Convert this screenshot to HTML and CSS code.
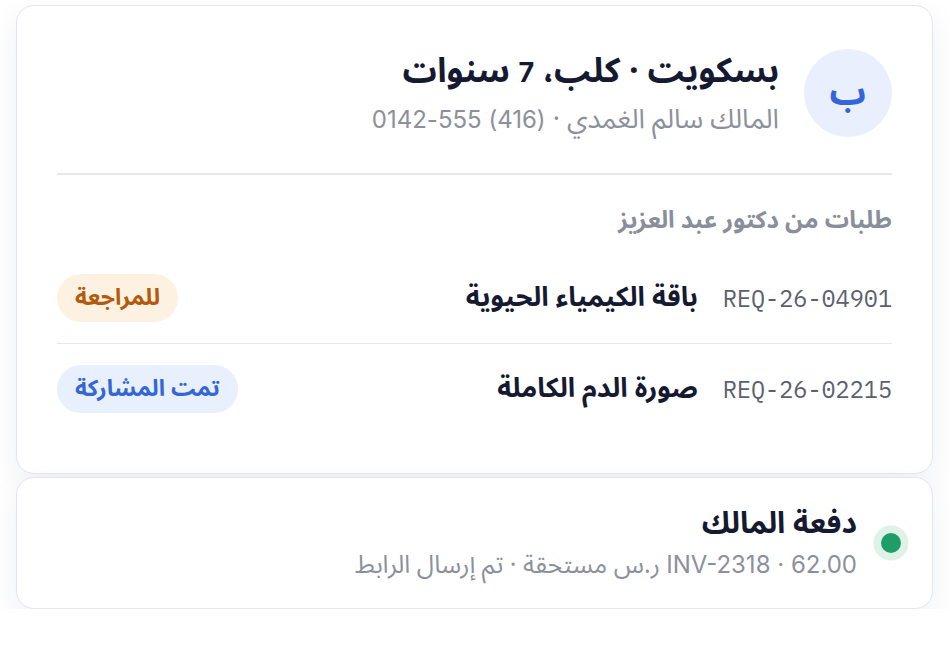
FILE: index.html
```html
<!DOCTYPE html>
<html lang="ar" dir="rtl">
<head>
<meta charset="utf-8">
<link rel="stylesheet" href="styles.css">
</head>
<body>
<div class="stack">
  <section class="card patient">
    <header class="head">
      <div class="avatar">ب</div>
      <div class="who">
        <div class="title">بسكويت · كلب، <span class="lat">7</span> سنوات</div>
        <div class="sub">المالك سالم الغمدي · <span class="lat">(416) 555-0142</span></div>
      </div>
    </header>
    <div class="rule"></div>
    <div class="label">طلبات من دكتور عبد العزيز</div>
    <div class="rows">
      <div class="row">
        <span class="code">REQ-26-04901</span>
        <span class="name">باقة الكيمياء الحيوية</span>
        <span class="badge amber">للمراجعة</span>
      </div>
      <div class="row">
        <span class="code">REQ-26-02215</span>
        <span class="name">صورة الدم الكاملة</span>
        <span class="badge blue">تمت المشاركة</span>
      </div>
    </div>
  </section>
  <section class="card pay">
    <span class="dot"></span>
    <div class="pay-text">
      <div class="pay-title">دفعة المالك</div>
      <div class="pay-sub"><span class="lat">INV-2318 · 62.00</span> ر.س مستحقة · تم إرسال الرابط</div>
    </div>
  </section>
</div>
</body>
</html>
```
FILE: styles.css
```css
html, body {
  margin: 0;
  background: #ffffff;
}
body {
  font-family: "Noto Sans Arabic", Inter, sans-serif;
  color: #151a30;
}
.lat {
  font-family: Inter, sans-serif;
}
.stack {
  display: flex;
  flex-direction: column;
  gap: 3px;
  padding: 5px 17px 0 16px;
}
.card {
  background: #fff;
  border: 1px solid #e3e6f1;
  border-radius: 18px;
  box-shadow: 0 12px 32px rgba(30, 40, 90, 0.07);
}
.patient {
  padding: 43px 40px 39px;
}
.head {
  display: flex;
  align-items: center;
  gap: 25px;
}
.avatar {
  width: 88px;
  height: 88px;
  border-radius: 50%;
  background: #e9effd;
  color: #3563d9;
  font-size: 36px;
  font-weight: 700;
  line-height: 1;
  display: flex;
  align-items: center;
  justify-content: center;
  flex: none;
}
.who {
  display: flex;
  flex-direction: column;
  gap: 10px;
}
.title {
  font-size: 34px;
  font-weight: 700;
  line-height: 42px;
  color: #151a30;
}
.title .lat {
  font-size: 27px;
}
.sub {
  font-size: 27px;
  line-height: 32px;
  color: #8c909c;
}
.sub .lat {
  font-size: 24px;
}
.rule {
  height: 1.5px;
  background: #e6e8ee;
  margin: 36px 0 30px;
}
.label {
  font-size: 24px;
  font-weight: 700;
  line-height: 32px;
  color: #8a8e9b;
  margin-bottom: 16px;
}
.row {
  display: flex;
  align-items: center;
  gap: 25px;
  padding: 21px 0;
}
.row + .row {
  border-top: 1.5px solid #e6e8ee;
}
.code {
  font-family: "IBM Plex Mono", "DejaVu Sans Mono", monospace;
  font-size: 23.5px;
  line-height: 30px;
  color: #5b6070;
  direction: ltr;
}
.name {
  font-size: 27px;
  font-weight: 700;
  line-height: 36px;
  color: #151a30;
}
.badge {
  margin-right: auto;
  height: 48px;
  padding: 0 18px;
  border-radius: 24px;
  display: flex;
  align-items: center;
  font-size: 23px;
  font-weight: 700;
}
.amber {
  background: #fdf1e2;
  color: #b45a0e;
}
.blue {
  background: #e8effd;
  color: #3566d6;
}
.pay {
  display: flex;
  align-items: center;
  gap: 16px;
  padding: 0 24px;
  height: 130px;
}
.dot {
  width: 20px;
  height: 20px;
  border-radius: 50%;
  background: #1f9d68;
  box-shadow: 0 0 0 7.5px #def2e8;
  margin: 0 7.5px;
  flex: none;
}
.pay-text {
  display: flex;
  flex-direction: column;
  gap: 6px;
}
.pay-title {
  font-size: 30px;
  font-weight: 700;
  line-height: 38px;
}
.pay-sub {
  font-size: 25px;
  line-height: 32px;
  color: #8c909c;
}
.pay-sub .lat {
  font-size: 24px;
}
```
